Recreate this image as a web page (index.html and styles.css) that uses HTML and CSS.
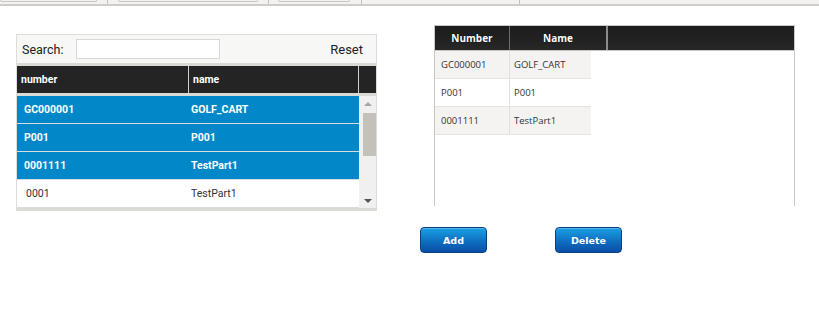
FILE: index.html
```html
<!DOCTYPE html>
<html>
<head>
<meta charset="utf-8">
<link rel="stylesheet" href="styles.css">
</head>
<body>
<div class="topbar">
  <div class="seg s1"><div class="tab tab1"></div></div>
  <div class="seg s2"><div class="tab tab2"></div></div>
  <div class="seg s3"><div class="tab tab3"></div></div>
  <div class="seg s4"></div>
  <div class="seg s5"></div>
</div>
<div class="main">
  <div class="left">
    <div class="toolbar">
      <span class="lbl">Search:</span>
      <input class="search" type="text">
      <span class="reset">Reset</span>
    </div>
    <div class="thead">
      <div class="th c1">number</div>
      <div class="th c2">name</div>
      <div class="th c3"></div>
    </div>
    <div class="tbody">
      <div class="rows">
        <div class="row sel"><div class="td c1">GC000001</div><div class="td c2">GOLF_CART</div></div>
        <div class="row sel"><div class="td c1">P001</div><div class="td c2">P001</div></div>
        <div class="row sel"><div class="td c1">0001111</div><div class="td c2">TestPart1</div></div>
        <div class="row"><div class="td c1 plain">0001</div><div class="td c2">TestPart1</div></div>
      </div>
      <div class="vscroll">
        <div class="arrow up"></div>
        <div class="thumb"></div>
        <div class="arrow down"></div>
      </div>
    </div>
  </div>
  <div class="right">
    <div class="rpanel">
      <div class="rhead">
        <div class="rth r1">Number</div>
        <div class="rth r2">Name</div>
      </div>
      <div class="rrow alt"><div class="rtd r1">GC000001</div><div class="rtd r2b">GOLF_CART</div></div>
      <div class="rrow"><div class="rtd r1">P001</div><div class="rtd r2b">P001</div></div>
      <div class="rrow alt"><div class="rtd r1">0001111</div><div class="rtd r2b">TestPart1</div></div>
    </div>
    <div class="buttons">
      <button class="btn">Add</button>
      <button class="btn">Delete</button>
    </div>
  </div>
</div>
</body>
</html>
```
FILE: styles.css
```css
* { box-sizing: border-box; }
body { margin: 0; background: #fff; font-family: Roboto, "Liberation Sans", sans-serif; }

.topbar { display: flex; height: 6px; background: #f3f2f0; border-bottom: 2px solid #cfccc7; }
.seg { height: 4px; border-right: 1px solid #c4c1bc; position: relative; }
.s1 { width: 108px; }
.s2 { width: 161px; }
.s3 { width: 93px; }
.s4 { width: 158px; }
.s5 { flex: 1; border-right: none; }
.tab { height: 2px; border: 1px solid #c9c6c1; border-top: none; border-radius: 0 0 4px 4px; }
.tab1 { width: 97px; margin-left: 0; }
.tab2 { width: 140px; margin-left: 10px; }
.tab3 { width: 72px; margin-left: 9px; }

.main { display: flex; align-items: flex-start; }

.left { margin: 28px 0 0 16px; width: 361px; border: 1px solid #dedddb; }
.toolbar { background: #f7f7f5; display: flex; align-items: center; padding: 0 13px 0 5px; border-bottom: 3px solid #dad9d6; height: 31px; }
.lbl { font-size: 12.5px; color: #222; }
.search { width: 144px; height: 20px; margin: 0 0 0 13px; border: 1px solid #d8d8d8; background: #fff; padding: 0; }
.reset { margin-left: auto; font-size: 13px; color: #222; }

.thead { display: flex; height: 30px; background: #242424; border-bottom: 3px solid #dad9d6; }
.th { color: #fff; font-weight: bold; font-size: 10.5px; display: flex; align-items: center; padding-left: 4px; }
.thead .c1 { width: 172px; border-right: 1px solid #d0d0d0; }
.thead .c2 { width: 170px; border-right: 1px solid #d0d0d0; padding-left: 4px; }
.thead .c3 { flex: 1; }

.tbody { display: flex; border-bottom: 2px solid #dad9d6; }
.rows { width: 342px; }
.row { display: flex; height: 28px; border-bottom: 1px solid #d9dde0; background: #fff; }
.row.sel { background: #0288c9; }
.td { display: flex; align-items: center; font-size: 10.5px; color: #333; }
.row.sel .td { color: #fff; font-weight: bold; }
.td.c1 { width: 172px; padding-left: 7px; }
.td.c1.plain { padding-left: 9px; }
.td.c2 { flex: 1; padding-left: 2px; }

.vscroll { width: 17px; background: #f1f0ee; display: flex; flex-direction: column; align-items: flex-end; }
.arrow { width: 0; height: 0; border-left: 4px solid transparent; border-right: 4px solid transparent; margin: 0 4px 0 0; }
.arrow.up { border-bottom: 4px solid #a9a6a1; margin-top: 6px; }
.thumb { width: 13px; height: 43px; background: #c4c1bb; margin-top: 7px; }
.arrow.down { border-top: 4px solid #555; margin-top: auto; margin-bottom: 5px; }

.right { margin: 19px 0 0 57px; width: 361px; }
.rpanel { height: 181px; border: 1px solid #cbc8c4; border-bottom: none; font-family: "Open Sans", "Noto Sans", sans-serif; }
.rhead { display: flex; height: 25px; background: linear-gradient(#1c1c1c, #272727); border-bottom: 1px solid #c8c6c2; }
.rth { color: #fff; font-weight: bold; font-size: 10px; display: flex; align-items: center; justify-content: center; text-shadow: 0 0 1px #000; }
.rth.r1 { width: 75px; border-right: 1px solid #6e6d6a; }
.rth.r2 { width: 98px; border-right: 2px solid #8e8c88; }
.rrow { display: flex; height: 28px; width: 156px; border-bottom: 1px solid #e6e4e0; background: #fff; }
.rrow.alt { background: #f4f3f1; }
.rtd { display: flex; align-items: center; font-size: 9.5px; color: #333; padding-left: 6px; }
.rtd.r1 { width: 75px; border-right: 1px solid #e2e0dc; }
.rtd.r2b { flex: 1; padding-left: 4px; }

.buttons { display: flex; gap: 68px; margin: 21px 0 0 -14px; }
.btn { width: 67px; height: 26px; border: 1px solid #0a3f82; border-radius: 4px; background: linear-gradient(#1aa0e2, #0e6fc2 55%, #0a4ea6); color: #fff; font-family: Tahoma, "DejaVu Sans", sans-serif; font-weight: bold; font-size: 9.5px; padding: 0; box-shadow: inset 0 1px 0 rgba(255,255,255,0.25); }
```
